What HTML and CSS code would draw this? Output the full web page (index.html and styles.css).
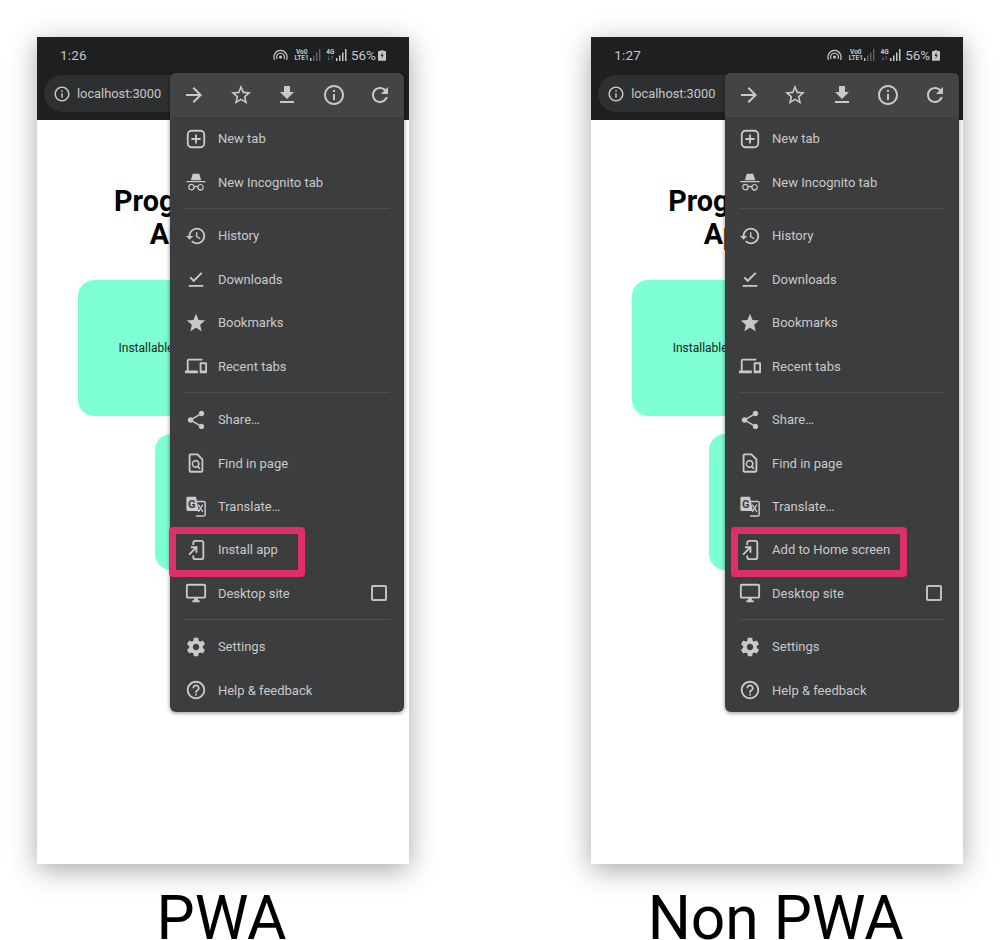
FILE: index.html
```html
<!DOCTYPE html>
<html lang="en">
<head>
<meta charset="utf-8">
<title>PWA vs Non PWA</title>
<link rel="stylesheet" href="styles.css">
</head>
<body>
<svg class="sprite" xmlns="http://www.w3.org/2000/svg">
  <symbol id="i-forward" viewBox="0 0 24 24"><path d="M12 4l-1.41 1.41L16.17 11H4v2h12.17l-5.58 5.59L12 20l8-8z"/></symbol>
  <symbol id="i-star-o" viewBox="0 0 24 24"><path d="M22 9.24l-7.19-.62L12 2 9.19 8.63 2 9.24l5.46 4.73L5.82 21 12 17.27 18.18 21l-1.63-7.03L22 9.24zM12 15.4l-3.76 2.27 1-4.28-3.32-2.88 4.38-.38L12 6.1l1.71 4.04 4.38.38-3.32 2.88 1 4.28L12 15.4z"/></symbol>
  <symbol id="i-download" viewBox="0 0 24 24"><path d="M19 9h-4V3H9v6H5l7 7 7-7zM5 18v2h14v-2H5z"/></symbol>
  <symbol id="i-info" viewBox="0 0 24 24"><path d="M11 7h2v2h-2zm0 4h2v6h-2zm1-9C6.48 2 2 6.48 2 12s4.48 10 10 10 10-4.48 10-10S17.52 2 12 2zm0 18c-4.41 0-8-3.59-8-8s3.59-8 8-8 8 3.59 8 8-3.59 8-8 8z"/></symbol>
  <symbol id="i-refresh" viewBox="0 0 24 24"><path d="M17.65 6.35C16.2 4.9 14.21 4 12 4c-4.42 0-7.99 3.58-7.99 8s3.57 8 7.99 8c3.73 0 6.84-2.55 7.73-6h-2.08c-.82 2.33-3.04 4-5.65 4-3.31 0-6-2.69-6-6s2.69-6 6-6c1.66 0 3.14.69 4.22 1.78L13 11h7V4l-2.35 2.35z"/></symbol>
  <symbol id="i-newtab" viewBox="0 0 24 24"><path fill-rule="evenodd" d="M7 2h10a5 5 0 0 1 5 5v10a5 5 0 0 1-5 5H7a5 5 0 0 1-5-5V7a5 5 0 0 1 5-5zm0 2a3 3 0 0 0-3 3v10a3 3 0 0 0 3 3h10a3 3 0 0 0 3-3V7a3 3 0 0 0-3-3z"/><path d="M11 7h2v4h4v2h-4v4h-2v-4H7v-2h4z"/></symbol>
  <symbol id="i-incognito" viewBox="0 0 24 24"><path d="M8.5 3h7l2.2 7H6.300z"/><path d="M1.500 10.800h21v1.600h-21z"/><path fill-rule="evenodd" d="M7 14a3.600 3.600 0 0 1 3.400 2.400 3 3 0 0 1 3.200 0A3.600 3.600 0 1 1 13.300 18a1.800 1.800 0 0 0-2.600 0A3.600 3.600 0 1 1 7 14zm0 1.400a2.200 2.200 0 1 0 0 4.400 2.200 2.200 0 0 0 0-4.400zm10 0a2.200 2.200 0 1 0 0 4.400 2.200 2.200 0 0 0 0-4.400z"/></symbol>
  <symbol id="i-history" viewBox="0 0 24 24"><path d="M13 3c-4.970 0-9 4.030-9 9H1l3.890 3.890.07.140L9 12H6c0-3.870 3.130-7 7-7s7 3.130 7 7-3.130 7-7 7c-1.930 0-3.680-.79-4.940-2.060l-1.420 1.420C8.270 19.990 10.510 21 13 21c4.970 0 9-4.030 9-9s-4.030-9-9-9zm-1 5v5l4.280 2.540.72-1.210-3.500-2.080V8H12z"/></symbol>
  <symbol id="i-check" viewBox="0 0 24 24"><path d="M4 18.500h16v2H4zM9.500 15.500L5 11l1.500-1.500 3 3L17.500 4.500 19 6z"/></symbol>
  <symbol id="i-star" viewBox="0 0 24 24"><path d="M12 17.270L18.180 21l-1.640-7.030L22 9.240l-7.190-.61L12 2 9.190 8.630 2 9.240l5.460 4.730L5.820 21z"/></symbol>
  <symbol id="i-devices" viewBox="0 0 24 24"><path d="M4 6h15V4H4c-1.100 0-2 .9-2 2v11H0v3h14v-3H4V6zm19 2h-6c-.55 0-1 .45-1 1v10c0 .55.45 1 1 1h6c.55 0 1-.45 1-1V9c0-.55-.45-1-1-1zm-1 9h-4v-7h4v7z"/></symbol>
  <symbol id="i-share" viewBox="0 0 24 24"><path d="M18 16.080c-.76 0-1.440.3-1.960.77L8.910 12.700c.05-.23.09-.46.09-.7s-.04-.47-.09-.7l7.050-4.110c.54.5 1.250.81 2.040.81 1.660 0 3-1.340 3-3s-1.340-3-3-3-3 1.340-3 3c0 .24.04.47.09.7L8.040 9.810C7.500 9.310 6.790 9 6 9c-1.660 0-3 1.340-3 3s1.340 3 3 3c.79 0 1.500-.31 2.040-.81l7.120 4.160c-.05.21-.08.43-.08.65 0 1.610 1.310 2.920 2.920 2.920s2.920-1.310 2.920-2.920-1.310-2.920-2.920-2.920z"/></symbol>
  <symbol id="i-find" viewBox="0 0 24 24"><path d="M14 1.500H6c-1.100 0-2 .9-2 2v17c0 1.100.9 2 2 2h12c1.100 0 2-.9 2-2V7.500l-6-6zm4 19H6v-17h7l5 5v12z"/><path fill-rule="evenodd" d="M11.500 8.500a4.500 4.500 0 0 1 3.600 7.200l2 2-1.300 1.300-2-2a4.500 4.500 0 1 1-2.300-8.500zm0 1.800a2.700 2.700 0 1 0 0 5.400 2.700 2.700 0 0 0 0-5.400z"/></symbol>
  <symbol id="i-translate" viewBox="0 0 24 24"><path d="M9 7h11.500a1.500 1.500 0 0 1 1.500 1.500v13a1.500 1.500 0 0 1-1.500 1.500H12" fill="none" stroke="currentColor" stroke-width="1.600"/><path d="M3 2h9l3.200 15.500H3A1.500 1.500 0 0 1 1.500 16V3.500A1.500 1.500 0 0 1 3 2z"/><text x="3.400" y="14" class="glyph">G</text><path d="M14.500 10.500l5 8M19.500 10.500l-5 8" fill="none" stroke="currentColor" stroke-width="1.400"/></symbol>
  <symbol id="i-install" viewBox="0 0 24 24"><path d="M9 6.500V4.500A2.500 2.500 0 0 1 11.500 2h6A2.500 2.500 0 0 1 20 4.500v15a2.500 2.500 0 0 1-2.500 2.500h-6A2.500 2.500 0 0 1 9 19.500V18" fill="none" stroke="currentColor" stroke-width="2"/><path d="M4.500 17L12 9.500M6.500 9h6v6" fill="none" stroke="currentColor" stroke-width="2"/></symbol>
  <symbol id="i-desktop" viewBox="0 0 24 24"><path d="M21 2H3c-1.100 0-2 .9-2 2v12c0 1.100.9 2 2 2h7v2H8v2h8v-2h-2v-2h7c1.100 0 2-.9 2-2V4c0-1.100-.9-2-2-2zm0 14H3V4h18v12z"/></symbol>
  <symbol id="i-settings" viewBox="0 0 24 24"><path d="M19.430 12.980c.04-.32.07-.64.07-.98s-.03-.66-.07-.98l2.110-1.650c.19-.15.24-.42.12-.64l-2-3.460c-.12-.22-.39-.3-.61-.22l-2.490 1c-.52-.4-1.080-.73-1.690-.98l-.38-2.650C14.460 2.180 14.250 2 14 2h-4c-.25 0-.46.18-.49.42l-.38 2.650c-.61.25-1.170.59-1.690.98l-2.490-1c-.23-.09-.49 0-.61.22l-2 3.460c-.13.22-.07.49.12.64l2.110 1.650c-.04.32-.07.65-.07.98s.03.66.07.98l-2.110 1.650c-.19.15-.24.42-.12.64l2 3.460c.12.22.39.3.61.22l2.490-1c.52.4 1.080.73 1.690.98l.38 2.650c.03.24.24.42.49.42h4c.25 0 .46-.18.49-.42l.38-2.650c.61-.25 1.170-.59 1.690-.98l2.490 1c.23.09.49 0 .61-.22l2-3.460c.12-.22.07-.49-.12-.64l-2.110-1.650zM12 15.500c-1.930 0-3.500-1.570-3.500-3.500s1.570-3.500 3.500-3.500 3.500 1.570 3.500 3.500-1.570 3.500-3.500 3.500z"/></symbol>
  <symbol id="i-help" viewBox="0 0 24 24"><path d="M11 18h2v-2h-2v2zm1-16C6.480 2 2 6.480 2 12s4.480 10 10 10 10-4.480 10-10S17.520 2 12 2zm0 18c-4.410 0-8-3.590-8-8s3.590-8 8-8 8 3.590 8 8-3.590 8-8 8zm0-14c-2.210 0-4 1.790-4 4h2c0-1.100.9-2 2-2s2 .9 2 2c0 2-3 1.750-3 5h2c0-2.250 3-2.500 3-5 0-2.210-1.790-4-4-4z"/></symbol>
  <symbol id="i-hotspot" viewBox="0 0 24 24"><path d="M2.500 19A10.500 10.500 0 0 1 12 4a10.500 10.500 0 0 1 9.500 15M6.500 17.500A6.500 6.500 0 0 1 12 8a6.500 6.500 0 0 1 5.500 9.500" fill="none" stroke="currentColor" stroke-width="2"/><circle cx="12" cy="14.500" r="2.500"/></symbol>
  <symbol id="i-signal-weak" viewBox="0 0 12 12"><rect x="0" y="9" width="1.400" height="3"/><rect x="3" y="6.500" width="1.400" height="5.500" opacity=".4"/><rect x="6" y="3.500" width="1.400" height="8.500" opacity=".4"/><rect x="9" y="0" width="1.400" height="12" opacity=".4"/></symbol>
  <symbol id="i-signal" viewBox="0 0 12 12"><rect x="0" y="9" width="1.500" height="3"/><rect x="3" y="6.500" width="1.500" height="5.500"/><rect x="6" y="3.500" width="1.500" height="8.500"/><rect x="9" y="0" width="1.500" height="12"/></symbol>
  <symbol id="i-battery" viewBox="0 0 9 12"><path d="M3 0h3v1h2a1 1 0 0 1 1 1v9a1 1 0 0 1-1 1H1a1 1 0 0 1-1-1V2a1 1 0 0 1 1-1h2z"/><path d="M5 2L3 6.500h1.500L4 10l2.300-4.800H4.800z" fill="#1e1f20"/></symbol>
</svg>

<main class="stage">

  <section class="shot">
    <div class="phone">
      <header class="chrome">
        <div class="status">
          <span class="time">1:26</span>
          <div class="status-icons">
            <svg class="hotspot"><use href="#i-hotspot"/></svg>
            <span class="net"><span>Vo0</span><span>LTE1</span></span>
            <svg class="bars"><use href="#i-signal-weak"/></svg>
            <span class="net net-4g"><span>4G</span><span>↓↑</span></span>
            <svg class="bars"><use href="#i-signal"/></svg>
            <span class="pct">56%</span>
            <svg class="battery"><use href="#i-battery"/></svg>
          </div>
        </div>
        <div class="toolbar">
          <div class="omnibox">
            <svg class="omni-icon"><use href="#i-info"/></svg>
            <span>localhost:3000</span>
          </div>
        </div>
      </header>
      <div class="content">
        <h1>Progressive Web Application</h1>
        <div class="cards">
          <div class="card">Installable</div>
          <div class="card">Offline</div>
          <div class="card">Engaging</div>
        </div>
      </div>
      <nav class="menu">
        <div class="menu-top">
          <svg class="top-icon"><use href="#i-forward"/></svg>
          <svg class="top-icon"><use href="#i-star-o"/></svg>
          <svg class="top-icon"><use href="#i-download"/></svg>
          <svg class="top-icon"><use href="#i-info"/></svg>
          <svg class="top-icon"><use href="#i-refresh"/></svg>
        </div>
        <div class="row"><svg class="icon"><use href="#i-newtab"/></svg>New tab</div>
        <div class="row"><svg class="icon"><use href="#i-incognito"/></svg>New Incognito tab</div>
        <hr class="divider">
        <div class="row"><svg class="icon"><use href="#i-history"/></svg>History</div>
        <div class="row"><svg class="icon"><use href="#i-check"/></svg>Downloads</div>
        <div class="row"><svg class="icon"><use href="#i-star"/></svg>Bookmarks</div>
        <div class="row"><svg class="icon"><use href="#i-devices"/></svg>Recent tabs</div>
        <hr class="divider">
        <div class="row"><svg class="icon"><use href="#i-share"/></svg>Share…</div>
        <div class="row"><svg class="icon"><use href="#i-find"/></svg>Find in page</div>
        <div class="row"><svg class="icon"><use href="#i-translate"/></svg>Translate…</div>
        <div class="row"><svg class="icon"><use href="#i-install"/></svg>Install app</div>
        <div class="row"><svg class="icon"><use href="#i-desktop"/></svg>Desktop site<span class="checkbox"></span></div>
        <hr class="divider">
        <div class="row"><svg class="icon"><use href="#i-settings"/></svg>Settings</div>
        <div class="row"><svg class="icon"><use href="#i-help"/></svg>Help &amp; feedback</div>
      </nav>
      <div class="highlight highlight-install"></div>
    </div>
    <p class="caption">PWA</p>
  </section>

  <section class="shot">
    <div class="phone">
      <header class="chrome">
        <div class="status">
          <span class="time">1:27</span>
          <div class="status-icons">
            <svg class="hotspot"><use href="#i-hotspot"/></svg>
            <span class="net"><span>Vo0</span><span>LTE1</span></span>
            <svg class="bars"><use href="#i-signal-weak"/></svg>
            <span class="net net-4g"><span>4G</span><span>↓↑</span></span>
            <svg class="bars"><use href="#i-signal"/></svg>
            <span class="pct">56%</span>
            <svg class="battery"><use href="#i-battery"/></svg>
          </div>
        </div>
        <div class="toolbar">
          <div class="omnibox">
            <svg class="omni-icon"><use href="#i-info"/></svg>
            <span>localhost:3000</span>
          </div>
        </div>
      </header>
      <div class="content">
        <h1>Progressive Web Application</h1>
        <div class="cards">
          <div class="card">Installable</div>
          <div class="card">Offline</div>
          <div class="card">Engaging</div>
        </div>
      </div>
      <nav class="menu">
        <div class="menu-top">
          <svg class="top-icon"><use href="#i-forward"/></svg>
          <svg class="top-icon"><use href="#i-star-o"/></svg>
          <svg class="top-icon"><use href="#i-download"/></svg>
          <svg class="top-icon"><use href="#i-info"/></svg>
          <svg class="top-icon"><use href="#i-refresh"/></svg>
        </div>
        <div class="row"><svg class="icon"><use href="#i-newtab"/></svg>New tab</div>
        <div class="row"><svg class="icon"><use href="#i-incognito"/></svg>New Incognito tab</div>
        <hr class="divider">
        <div class="row"><svg class="icon"><use href="#i-history"/></svg>History</div>
        <div class="row"><svg class="icon"><use href="#i-check"/></svg>Downloads</div>
        <div class="row"><svg class="icon"><use href="#i-star"/></svg>Bookmarks</div>
        <div class="row"><svg class="icon"><use href="#i-devices"/></svg>Recent tabs</div>
        <hr class="divider">
        <div class="row"><svg class="icon"><use href="#i-share"/></svg>Share…</div>
        <div class="row"><svg class="icon"><use href="#i-find"/></svg>Find in page</div>
        <div class="row"><svg class="icon"><use href="#i-translate"/></svg>Translate…</div>
        <div class="row"><svg class="icon"><use href="#i-install"/></svg>Add to Home screen</div>
        <div class="row"><svg class="icon"><use href="#i-desktop"/></svg>Desktop site<span class="checkbox"></span></div>
        <hr class="divider">
        <div class="row"><svg class="icon"><use href="#i-settings"/></svg>Settings</div>
        <div class="row"><svg class="icon"><use href="#i-help"/></svg>Help &amp; feedback</div>
      </nav>
      <div class="highlight highlight-home"></div>
    </div>
    <p class="caption">Non PWA</p>
  </section>

</main>
</body>
</html>
```

FILE: styles.css
```css
* { box-sizing: border-box; }

html, body {
  margin: 0;
  height: 940px;
  overflow: hidden;
  background: #fff;
}

body {
  font-family: Roboto, "Liberation Sans", sans-serif;
}

.sprite { display: none; }

.stage {
  display: flex;
  gap: 182.2px;
  padding: 37px 0 0 37px;
}

.shot {
  display: flex;
  flex-direction: column;
  width: 372px;
}

.phone {
  position: relative;
  height: 827px;
  background: #fff;
  box-shadow: 0 6px 26px rgba(0, 0, 0, 0.34);
}

/* browser chrome */
.chrome {
  height: 83px;
  background: #1e1f20;
  color: #c6c6c6;
}

.status {
  display: flex;
  align-items: center;
  justify-content: space-between;
  height: 36px;
  margin-bottom: 2px;
  padding: 0 23px;
}

.time {
  font-size: 13.5px;
  letter-spacing: 0.2px;
}

.status-icons {
  display: flex;
  align-items: center;
}

.hotspot {
  width: 15px;
  height: 15px;
  fill: currentColor;
  margin-right: 7px;
}

.net {
  display: flex;
  flex-direction: column;
  align-items: center;
  font-size: 6.5px;
  line-height: 6.5px;
  font-weight: 700;
}

.net-4g {
  margin-left: 4px;
}

.bars {
  width: 12px;
  height: 12px;
  fill: currentColor;
  margin-left: 1.5px;
}

.pct {
  font-size: 13.5px;
  margin-left: 3px;
}

.battery {
  width: 8px;
  height: 11px;
  fill: currentColor;
  margin-left: 2px;
}

.toolbar {
  padding: 0 7px;
}

.omnibox {
  display: flex;
  align-items: center;
  gap: 6px;
  width: 300px;
  height: 37px;
  padding-left: 9px;
  border-radius: 19px;
  background: #2e2f31;
  font-size: 12.8px;
}

.omni-icon {
  width: 18px;
  height: 18px;
  fill: currentColor;
}

/* page under the menu */
.content {
  padding-top: 65px;
  text-align: center;
}

h1 {
  width: 240px;
  margin: 0 auto 29px;
  font-size: 28.8px;
  line-height: 33px;
  font-weight: 700;
  color: #000;
}

.cards {
  display: flex;
  flex-wrap: wrap;
  justify-content: center;
  gap: 18px;
}

.card {
  display: flex;
  align-items: center;
  justify-content: center;
  width: 136px;
  height: 136px;
  padding-bottom: 1px;
  border-radius: 16px;
  background: #7fffd4;
  font-size: 12px;
  color: #1c1c1c;
}

/* overflow menu */
.menu {
  position: absolute;
  top: 36px;
  left: 133.4px;
  width: 234px;
  height: 639px;
  border-radius: 6px;
  overflow: hidden;
  background: #3c3d3f;
  color: #c9c9c9;
  box-shadow: 0 1px 4px rgba(0, 0, 0, 0.45);
  font-size: 13px;
}

.menu-top {
  display: flex;
  align-items: center;
  justify-content: space-between;
  height: 44.3px;
  padding: 0 12px;
  background: #434446;
}

.top-icon {
  width: 24px;
  height: 24px;
  fill: currentColor;
}

.row {
  display: flex;
  align-items: center;
  height: 43.4px;
  padding: 0 17px 0 14.5px;
}

.icon {
  flex: none;
  width: 22px;
  height: 22px;
  margin-right: 11px;
  fill: currentColor;
}

.glyph {
  font-family: Roboto, "Liberation Sans", sans-serif;
  font-size: 12px;
  font-weight: 700;
  fill: #3c3d3f;
}

.divider {
  height: 1px;
  margin: 4px 14px 5.2px;
  border: 0;
  background: #4d4e50;
}

.checkbox {
  width: 16px;
  height: 16px;
  margin-left: auto;
  border: 2px solid #c0c0c0;
  border-radius: 2px;
}

/* callout over the menu item */
.highlight {
  position: absolute;
  top: 490px;
  height: 50px;
  border: 7px solid #dc2f6c;
  border-radius: 4px;
}

.highlight-install {
  left: 132px;
  width: 136px;
}

.highlight-home {
  left: 140px;
  width: 176px;
}

.caption {
  margin: 33px 3px 0 0;
  font-size: 60.5px;
  line-height: 43px;
  text-align: center;
  color: #000;
}
```
